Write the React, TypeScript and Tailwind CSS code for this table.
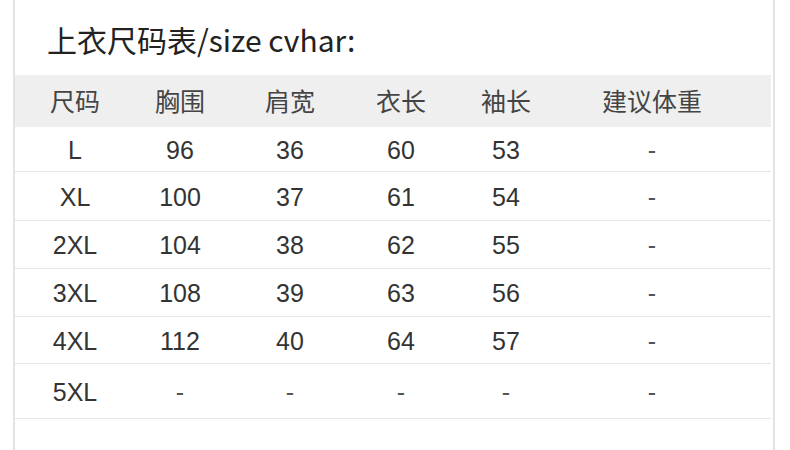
const headers = ['尺码', '胸围', '肩宽', '衣长', '袖长', '建议体重']

const rows = [
  { h: 'h-[45px]', cells: ['L', '96', '36', '60', '53', '-'] },
  { h: 'h-[49px]', cells: ['XL', '100', '37', '61', '54', '-'] },
  { h: 'h-[48px]', cells: ['2XL', '104', '38', '62', '55', '-'] },
  { h: 'h-[48px]', cells: ['3XL', '108', '39', '63', '56', '-'] },
  { h: 'h-[47px]', cells: ['4XL', '112', '40', '64', '57', '-'] },
  { h: 'h-[55px]', cells: ['5XL', '-', '-', '-', '-', '-'] },
]

const cols = 'grid grid-cols-[106px_104px_116px_106px_104px_188px] pl-[7px]'

export default function App() {
  return (
    <div className="w-[790px] h-[450px] bg-white pl-[13px] overflow-hidden">
      <div className="w-[762px] h-full border-l-2 border-r-2 border-[#e3e3e3] flex flex-col">
        {/* title */}
        <div className="h-[75px] flex items-center pl-[32px] pt-[4px] text-[30px] text-[#222] font-['Noto_Sans_CJK_SC',sans-serif]">
          上衣尺码表/size cvhar:
        </div>

        <div className="mr-[2px]">
          {/* header row */}
          <div className={`${cols} h-[52px] items-center bg-[#efefef] text-[25px] text-[#444] font-['Noto_Sans_CJK_SC',sans-serif]`}>
            {headers.map((h) => (
              <div key={h} className="text-center">{h}</div>
            ))}
          </div>

          {rows.map((row) => (
            <div
              key={row.cells[0]}
              className={`${cols} ${row.h} items-center pt-[3px] border-b border-[#e6e6e6] text-[25px] text-[#333] font-['Liberation_Sans',Arial,sans-serif]`}
            >
              {row.cells.map((c, i) => (
                <div key={i} className={`text-center ${c === '-' ? 'text-[#555]' : ''}`}>
                  {c}
                </div>
              ))}
            </div>
          ))}
        </div>
      </div>
    </div>
  )
}
